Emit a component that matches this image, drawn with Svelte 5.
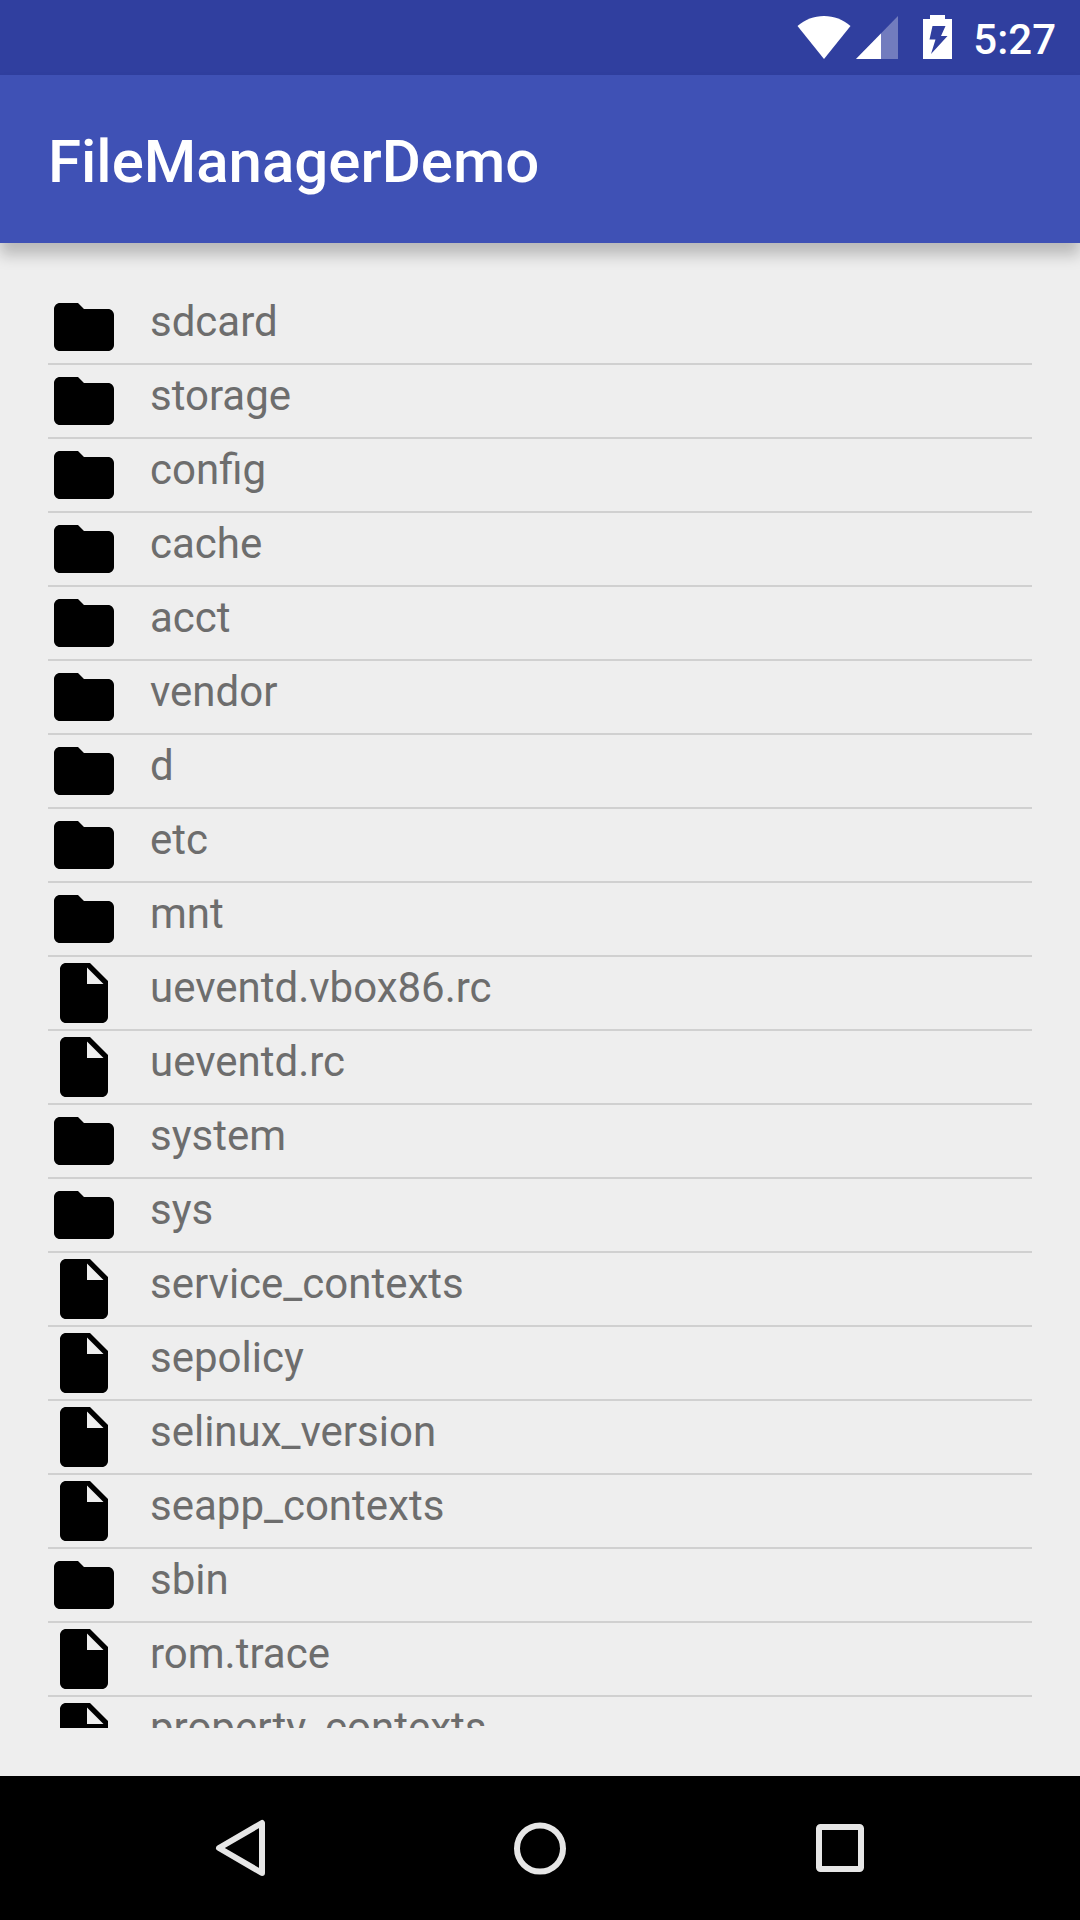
<script>
  const entries = [
    { name: 'sdcard', folder: true },
    { name: 'storage', folder: true },
    { name: 'config', folder: true },
    { name: 'cache', folder: true },
    { name: 'acct', folder: true },
    { name: 'vendor', folder: true },
    { name: 'd', folder: true },
    { name: 'etc', folder: true },
    { name: 'mnt', folder: true },
    { name: 'ueventd.vbox86.rc', folder: false },
    { name: 'ueventd.rc', folder: false },
    { name: 'system', folder: true },
    { name: 'sys', folder: true },
    { name: 'service_contexts', folder: false },
    { name: 'sepolicy', folder: false },
    { name: 'selinux_version', folder: false },
    { name: 'seapp_contexts', folder: false },
    { name: 'sbin', folder: true },
    { name: 'rom.trace', folder: false },
    { name: 'property_contexts', folder: false }
  ];
</script>

<div class="screen">
  <div class="status">
    <svg class="wifi" viewBox="0 0 54 44" aria-hidden="true">
      <path d="M0.500 11C8 4.500 17 1 27 1s19 3.500 26.500 10L27 44z" fill="#fff" />
    </svg>
    <svg class="signal" viewBox="0 0 42 44" aria-hidden="true">
      <path d="M42 1v43H0z" fill="#fff" fill-opacity="0.32" />
      <path d="M25 18.400V44H0z" fill="#fff" />
    </svg>
    <svg class="battery" viewBox="0 0 29 44" aria-hidden="true">
      <path
        fill="#fff"
        fill-rule="evenodd"
        d="M7 0h15v4h7v40H0V4h7zM9.500 11L6.500 24.500h6L8 39 24.500 21H18l4.500-10z"
      />
    </svg>
    <time>5:27</time>
  </div>

  <header>
    <h1>FileManagerDemo</h1>
  </header>

  <main>
    <ul>
      {#each entries as entry (entry.name)}
        <li>
          <button type="button" class="row">
            <svg class="icon" viewBox="0 0 24 24" aria-hidden="true">
              {#if entry.folder}
                <path d="M10 4H4c-1.100 0-2 .9-2 2v12c0 1.100.9 2 2 2h16c1.100 0 2-.9 2-2V8c0-1.100-.9-2-2-2h-8z" />
              {:else}
                <path d="M6 2c-1.100 0-2 .9-2 2v16c0 1.100.9 2 2 2h12c1.100 0 2-.9 2-2V8l-6-6H6zm7 7V3.500L18.500 9H13z" />
              {/if}
            </svg>
            <span>{entry.name}</span>
          </button>
        </li>
      {/each}
    </ul>
  </main>

  <nav aria-label="System">
    <button type="button" aria-label="Back">
      <svg viewBox="0 0 72 72" aria-hidden="true">
        <path d="M58 11v50L15 36z" />
      </svg>
    </button>
    <button type="button" aria-label="Home">
      <svg viewBox="0 0 72 72" aria-hidden="true">
        <circle cx="36" cy="36.500" r="23" />
      </svg>
    </button>
    <button type="button" aria-label="Recent apps">
      <svg viewBox="0 0 72 72" aria-hidden="true">
        <rect x="15" y="15" width="42" height="42" rx="1.500" />
      </svg>
    </button>
  </nav>
</div>

<style>
  :global(body) {
    margin: 0;
    background: #eeeeee;
  }

  .screen {
    display: flex;
    flex-direction: column;
    height: 100vh;
    font-family: Roboto, sans-serif;
    background: #eeeeee;
  }

  .status {
    display: flex;
    align-items: flex-start;
    justify-content: flex-end;
    flex: none;
    height: 75px;
    padding: 0 24px;
    box-sizing: border-box;
    background: #303f9f;
    color: #fff;
  }

  .status svg {
    height: 44px;
    margin-top: 15px;
  }

  .wifi {
    width: 54px;
    margin-right: 5px;
  }

  .signal {
    width: 42px;
    margin-right: 25px;
  }

  .battery {
    width: 29px;
    margin-right: 21px;
  }

  time {
    font-size: 42px;
    line-height: 48px;
    font-weight: 500;
    margin-top: 16px;
  }

  header {
    position: relative;
    z-index: 1;
    display: flex;
    align-items: center;
    flex: none;
    height: 168px;
    padding: 5px 48px 0;
    box-sizing: border-box;
    background: #3f51b5;
    color: #fff;
    box-shadow: 0 12px 14px 0 rgba(0, 0, 0, 0.22);
  }

  h1 {
    margin: 0;
    font-size: 60px;
    line-height: 72px;
    font-weight: 500;
  }

  main {
    display: flex;
    flex-direction: column;
    flex: 1;
    min-height: 0;
    padding: 48px;
  }

  ul {
    flex: 1;
    min-height: 0;
    margin: 0;
    padding: 0;
    list-style: none;
    overflow: hidden;
  }

  li {
    border-bottom: 2px solid #d0d0d0;
  }

  .row {
    display: flex;
    align-items: flex-start;
    gap: 30px;
    width: 100%;
    padding: 0;
    border: 0;
    background: none;
    font: inherit;
    font-size: 42px;
    line-height: 48px;
    color: #6d6d6d;
    text-align: left;
  }

  .row span {
    padding-top: 7px;
  }

  .icon {
    display: block;
    flex: none;
    width: 72px;
    height: 72px;
    fill: #000;
  }

  nav {
    display: grid;
    grid-template-columns: repeat(3, 1fr);
    flex: none;
    height: 144px;
    padding: 0 90px;
    background: #000;
  }

  nav button {
    display: flex;
    align-items: center;
    justify-content: center;
    padding: 0;
    border: 0;
    background: none;
  }

  nav svg {
    width: 72px;
    height: 72px;
    fill: none;
    stroke: #e6e6e6;
    stroke-width: 6;
    stroke-linejoin: round;
  }
</style>
